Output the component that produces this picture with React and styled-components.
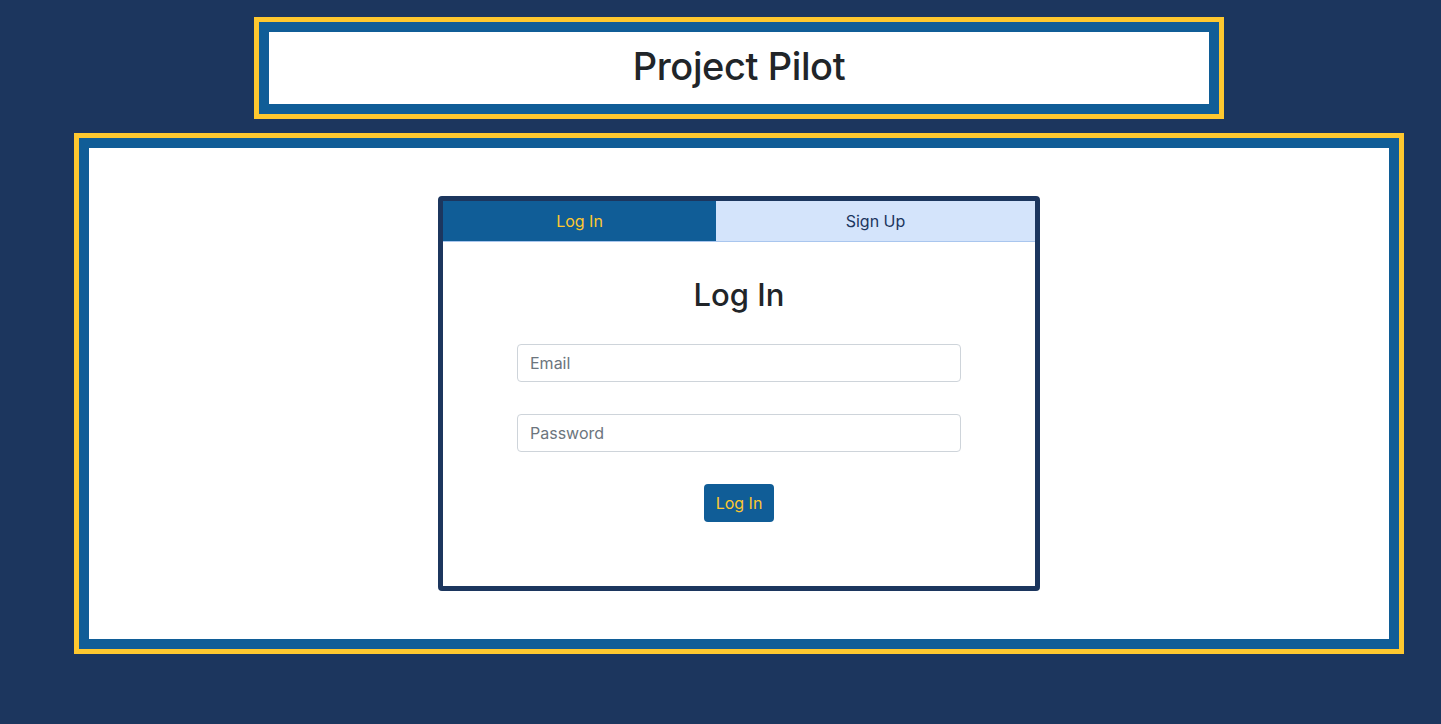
import React from "react";
import styled, { createGlobalStyle } from "styled-components";

const GlobalStyle = createGlobalStyle`
    html, body {
        margin: 0;
        background-color: #1c365e;
        font-family: Inter, "Noto Sans", Roboto, sans-serif;
        color: #212529;
    }
    * {
        box-sizing: border-box;
    }
`

const Page = styled.div`
    min-height: 724px;
    padding: 17px 37px 0 74px;
    display: flex;
    flex-direction: column;
    align-items: center;
    gap: 14px;
`

const Frame = styled.div`
    border: 5px solid #fec82f;
    width: ${props => props.width}px;
`

const Panel = styled.div`
    border: 10px solid #105d97;
    background-color: #fff;
    padding: ${props => props.pad || "0"};
    display: flex;
    justify-content: center;
`

const Title = styled.h1`
    margin: 0;
    height: 72px;
    line-height: 68px;
    font-size: 38px;
    font-weight: 500;
    letter-spacing: -0.4px;
`

const Card = styled.div`
    width: 602px;
    border: 5px solid #1c365e;
    border-radius: 4px;
    background-color: #fff;
`

const Tabs = styled.div`
    display: flex;
    border-bottom: 1px solid #a9c6ee;
`

const Tab = styled.button`
    all: unset;
    box-sizing: border-box;
    flex: 0 0 ${props => props.size}px;
    height: 40px;
    text-align: center;
    font-size: 16px;
    cursor: pointer;
    background-color: ${props => props.active ? "#105d97" : "#d4e4fb"};
    color: ${props => props.active ? "#fec82f" : "#1c365e"};
`

const Body = styled.form`
    display: flex;
    flex-direction: column;
    align-items: center;
    padding: 34px 0 64px;
`

const Heading = styled.h2`
    margin: 0 0 30px;
    font-size: 31px;
    font-weight: 500;
    line-height: 38px;
`

const Input = styled.input`
    width: 444px;
    height: 38px;
    padding: 0 12px;
    margin-bottom: 32px;
    border: 1px solid #ced4da;
    border-radius: 4px;
    font-family: inherit;
    font-size: 16px;
    color: #212529;

    &::placeholder {
        color: #6c757d;
    }
`

const Submit = styled.button`
    width: 70px;
    height: 38px;
    border: none;
    border-radius: 4px;
    background-color: #105d97;
    color: #fec82f;
    font-family: inherit;
    font-size: 16px;
    cursor: pointer;
`

const App = () => {
    return(
        <>
            <GlobalStyle />
            <Page>
                <Frame width={970}>
                    <Panel>
                        <Title>Project Pilot</Title>
                    </Panel>
                </Frame>
                <Frame width={1330}>
                    <Panel pad="48px 0">
                        <Card>
                            <Tabs>
                                <Tab active size={273}>Log In</Tab>
                                <Tab size={319}>Sign Up</Tab>
                            </Tabs>
                            <Body onSubmit={e => e.preventDefault()}>
                                <Heading>Log In</Heading>
                                <Input type="email" placeholder="Email" />
                                <Input type="password" placeholder="Password" />
                                <Submit type="submit">Log In</Submit>
                            </Body>
                        </Card>
                    </Panel>
                </Frame>
            </Page>
        </>
    );
};

export default App;
